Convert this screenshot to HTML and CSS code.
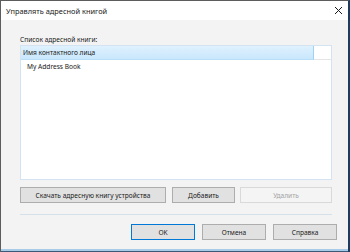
FILE: index.html
```html
<!DOCTYPE html>
<html lang="ru">
<head>
    <meta charset="UTF-8">
    <title>Управлять адресной книгой</title>
    <link rel="stylesheet" href="styles.css">
</head>
<body>
    <div class="window">
        <div class="titlebar">
            <span class="title">Управлять адресной книгой</span>
            <svg class="close" width="9" height="9" viewBox="0 0 9 9">
                <path d="M1 1 L8 8 M8 1 L1 8" stroke="#1a1a1a" stroke-width="1"/>
            </svg>
        </div>

        <div class="content">
            <div class="list-label">Список адресной книги:</div>
            <div class="listbox">
                <div class="list-header">
                    <div class="header-cell">Имя контактного лица</div>
                    <div class="header-rest"></div>
                </div>
                <div class="list-row">My Address Book</div>
            </div>

            <div class="actions">
                <button class="btn btn-wide">Скачать адресную книгу устройства</button>
                <button class="btn btn-add">Добавить</button>
                <button class="btn btn-remove" disabled>Удалить</button>
            </div>

            <div class="separator"></div>

            <div class="footer">
                <button class="btn btn-footer btn-default">OK</button>
                <button class="btn btn-footer">Отмена</button>
                <button class="btn btn-footer">Справка</button>
            </div>
        </div>
        <div class="bottom-edge"></div>
    </div>
</body>
</html>
```

FILE: styles.css
```css
* {
    margin: 0;
    padding: 0;
    box-sizing: border-box;
}

body {
    font-family: 'Noto Sans', 'Liberation Sans', sans-serif;
    font-size: 6.6px;
    color: #1a1a1a;
    background: #f3f3f3;
}

.window {
    width: 350px;
    height: 252px;
    display: flex;
    flex-direction: column;
    background: #f3f3f3;
    border-top: 1px solid #5c5c5c;
    border-left: 1px solid #5c5c5c;
    border-right: 2px solid #1c3d5e;
}

.titlebar {
    height: 19px;
    background: #fff;
    display: flex;
    align-items: center;
    justify-content: space-between;
    padding: 0 5px 0 5px;
}

.title {
    font-size: 7.4px;
    color: #1a1a1a;
}

.close {
    display: block;
    margin-bottom: 1px;
}

.content {
    flex: 1;
    padding: 14px 16px 0 19px;
    display: flex;
    flex-direction: column;
}

.list-label {
    height: 11px;
    line-height: 11px;
}

.listbox {
    height: 135px;
    background: #fff;
    border: 1px solid #d3e3f1;
}

.list-header {
    display: flex;
    height: 14px;
}

.header-cell {
    width: 293px;
    background: linear-gradient(#dff1fe, #c9e7fc);
    border-right: 1px solid #9ed3f7;
    border-bottom: 1px solid #b9def8;
    padding-left: 2px;
    line-height: 13px;
}

.header-rest {
    flex: 1;
    border-bottom: 1px solid #e5e5e5;
}

.list-row {
    padding-left: 6px;
    height: 13px;
    line-height: 13px;
}

.actions {
    display: flex;
    margin-top: 7px;
}

.btn {
    height: 16px;
    font-family: inherit;
    font-size: 6.6px;
    color: #1a1a1a;
    background: #e1e1e1;
    border: 1px solid #adadad;
}

.btn-wide {
    width: 146px;
}

.btn-add {
    width: 63px;
    margin-left: 6px;
}

.btn-remove {
    width: 92px;
    margin-left: 5px;
    background: #f4f4f4;
    border-color: #d9d9d9;
    color: #a3a3a3;
}

.separator {
    height: 1px;
    margin-top: 11px;
    background: #d6e0e8;
}

.footer {
    display: flex;
    justify-content: flex-end;
    gap: 7px;
    margin-top: 9px;
    margin-right: -5px;
}

.btn-footer {
    width: 64px;
}

.btn-default {
    border-color: #0078d7;
}

.bottom-edge {
    height: 3px;
    background: #a8cbe8;
    border-bottom: 1px solid #3a5a78;
}
```
